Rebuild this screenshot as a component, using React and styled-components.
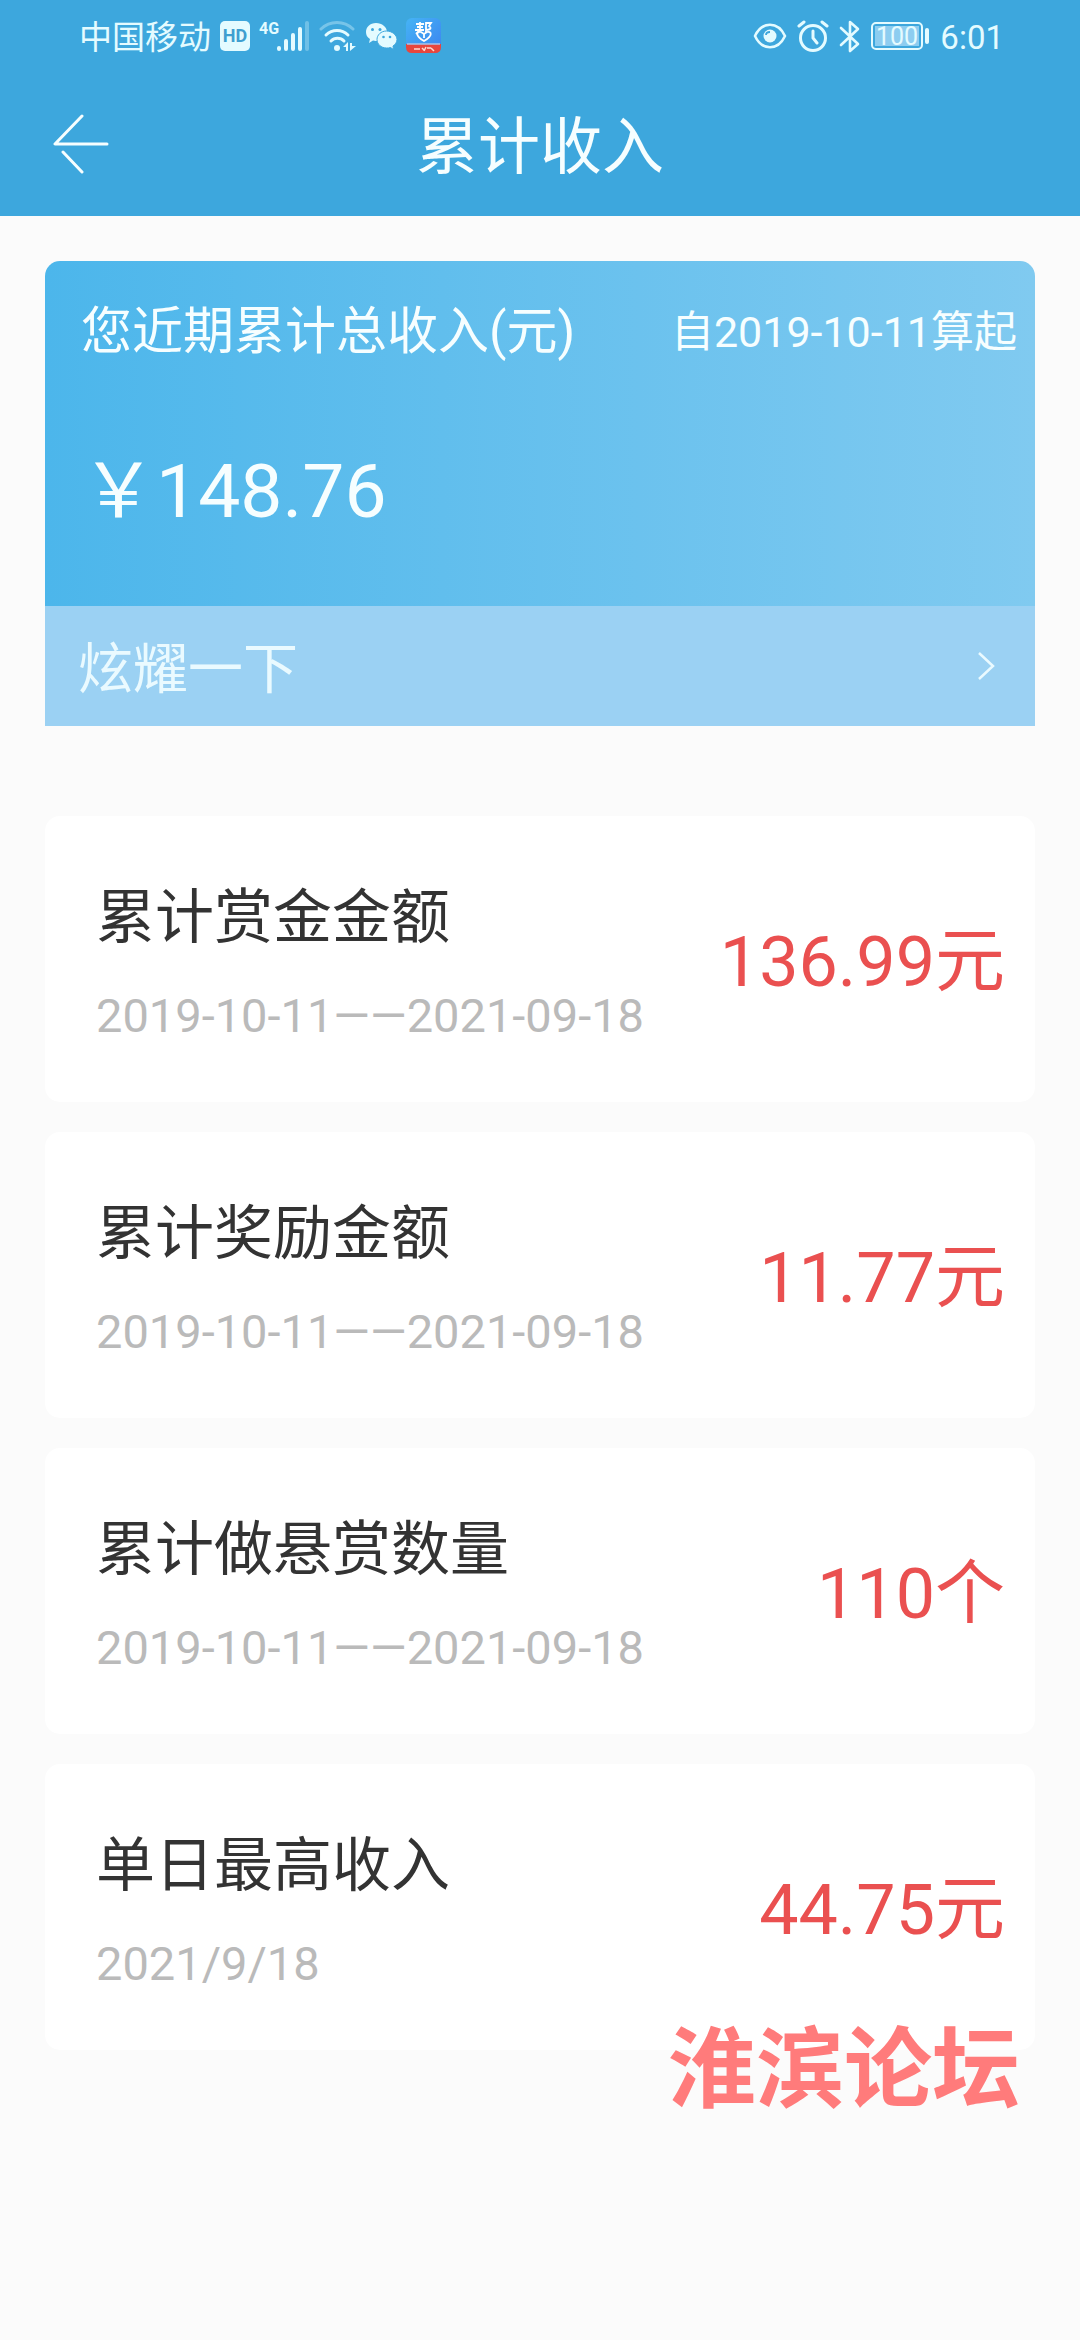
import styled, { createGlobalStyle } from 'styled-components'

const GlobalStyle = createGlobalStyle`
    *, *::before, *::after {
        box-sizing: border-box;
    }

    body {
        margin: 0;
        background-color: #fbfbfb;
        font-family: Roboto, 'Noto Sans CJK SC', sans-serif;
    }

    h1, h2, p, ul {
        margin: 0;
        padding: 0;
        font-weight: 400;
    }

    button {
        border: none;
        padding: 0;
        background: none;
        font-family: inherit;
        cursor: pointer;
    }

    svg {
        display: block;
        flex-shrink: 0;
    }
`

const Page = styled.div`
    min-height: 100vh;
`

const Header = styled.header`
    background-color: #3da7dd;
    color: #f6feff;
`

const StatusBar = styled.div`
    display: flex;
    align-items: center;
    justify-content: space-between;
    height: 72px;
    padding: 0 76px 0 79px;
    color: #e4fbff;
`

const StatusGroup = styled.div`
    display: flex;
    align-items: center;
    gap: ${(props) => props.$gap}px;
`

const StatusText = styled.span`
    padding-top: 3px;
    font-size: 33px;
    line-height: 40px;
`

const NavBar = styled.div`
    display: grid;
    grid-template-columns: 160px 1fr 160px;
    align-items: center;
    height: 144px;
`

const BackButton = styled.button`
    display: flex;
    align-items: center;
    height: 144px;
    padding-left: 52px;
    color: inherit;
`

const PageTitle = styled.h1`
    padding-top: 8px;
    font-size: 62px;
    line-height: 88px;
    text-align: center;
`

const Main = styled.main`
    padding: 45px 45px 0;
`

const SummaryCard = styled.section`
    border-radius: 15px 15px 0 0;
    overflow: hidden;
    color: #f6feff;
`

const SummaryBody = styled.div`
    height: 345px;
    padding: 36px 18px 0 36px;
    background: linear-gradient(to right, #4cb6eb, #80caf0);
`

const SummaryTop = styled.div`
    display: flex;
    align-items: center;
    justify-content: space-between;
`

const SummaryLabel = styled.h2`
    font-size: 51px;
    line-height: 70px;
`

const SummarySince = styled.span`
    font-size: 43px;
    line-height: 70px;
`

const SummaryAmount = styled.p`
    margin-top: 72px;
    font-size: 75px;
    line-height: 104px;
`

const ShareButton = styled.button`
    display: flex;
    align-items: center;
    justify-content: space-between;
    width: 100%;
    height: 120px;
    padding: 0 40px 0 33px;
    background-color: #9bd1f3;
    color: #eafaff;
    font-size: 55px;
    line-height: 80px;
`

const ShareLabel = styled.span`
    padding-top: 6px;
`

const StatList = styled.ul`
    display: flex;
    flex-direction: column;
    gap: 30px;
    margin-top: 90px;
    list-style: none;
`

const StatCard = styled.li`
    display: flex;
    align-items: center;
    justify-content: space-between;
    height: 286px;
    padding: 6px 30px 0 51px;
    border-radius: 15px;
    background-color: #fff;
`

const StatInfo = styled.div`
    display: flex;
    flex-direction: column;
    gap: 28px;
`

const StatTitle = styled.h2`
    font-size: 59px;
    line-height: 80px;
    color: #333;
`

const StatDate = styled.p`
    font-size: 47px;
    line-height: 60px;
    color: #bababa;
`

const StatValue = styled.span`
    font-size: 70px;
    line-height: 96px;
    color: #ea5050;
`

// sits over the lower edge of the last card
const Watermark = styled.div`
    position: absolute;
    top: 2004px;
    right: 60px;
    font-family: 'Noto Sans CJK SC', cursive;
    font-size: 88px;
    font-weight: 700;
    line-height: 116px;
    color: #ff7b7b;
    pointer-events: none;
`

const stats = [
    {
        title: '累计赏金金额',
        date: '2019-10-11——2021-09-18',
        value: '136.99元',
    },
    {
        title: '累计奖励金额',
        date: '2019-10-11——2021-09-18',
        value: '11.77元',
    },
    {
        title: '累计做悬赏数量',
        date: '2019-10-11——2021-09-18',
        value: '110个',
    },
    { title: '单日最高收入', date: '2021/9/18', value: '44.75元' },
]

function HdIcon() {
    return (
        <svg width="30" height="30" viewBox="0 0 30 30">
            <rect width="30" height="30" rx="5" fill="currentColor" />
            <text
                x="15"
                y="21"
                fontSize="18"
                fontWeight="700"
                textAnchor="middle"
                fill="#3f9fd0"
            >
                HD
            </text>
        </svg>
    )
}

function SignalIcon() {
    return (
        <svg width="51" height="32" viewBox="0 0 51 32">
            <text
                x="0"
                y="14"
                fontSize="16"
                fontWeight="700"
                fill="currentColor"
            >
                4G
            </text>
            <g stroke="currentColor" strokeWidth="4" strokeLinecap="round">
                <path d="M20 28v1M27 21v8M34 15v14M41 9v20" />
                <path d="M48 3v26" opacity="0.3" />
            </g>
        </svg>
    )
}

function WifiIcon() {
    return (
        <svg width="37" height="32" viewBox="0 0 37 32" fill="none">
            <g stroke="currentColor" strokeWidth="3" strokeLinecap="round">
                <path d="M2 9a23 23 0 0 1 32 0" opacity="0.35" />
                <path d="M7 15a16 16 0 0 1 22 0" />
                <path d="M12 21a9 9 0 0 1 13 0" />
            </g>
            <circle cx="18" cy="28" r="3" fill="currentColor" />
            <path d="M24 27l5-5v9h-2v-4zM31 23v8l6-5h-4v-3z" fill="currentColor" />
        </svg>
    )
}

function WechatIcon() {
    return (
        <svg width="32" height="28" viewBox="0 0 32 28">
            <path
                d="M11 1C5 1 1 5 1 10c0 3 1 5 4 7l-1 4 4-2.500c2 .5 3 .5 5 .5C21 19 22 14 22 10 22 5 17 1 11 1z"
                fill="currentColor"
            />
            <path
                d="M21.500 9C16 9 12 13 12 17.500S16 26 21.500 26c1.500 0 2.500 0 4-.5l3 2-.5-3.500c2.500-1.500 4-4 4-6.500C32 13 27 9 21.500 9z"
                fill="currentColor"
                stroke="#3da7dd"
            />
            <g fill="#3da7dd">
                <circle cx="7.500" cy="7.500" r="1.500" />
                <circle cx="15" cy="7.500" r="1.500" />
                <circle cx="18.500" cy="15" r="1.300" />
                <circle cx="25" cy="15" r="1.300" />
            </g>
        </svg>
    )
}

function HelpAppIcon() {
    return (
        <svg width="35" height="36" viewBox="0 0 35 36">
            <defs>
                <linearGradient id="appBlue" x1="0" y1="0" x2="1" y2="1">
                    <stop offset="0" stopColor="#45b4f5" />
                    <stop offset="1" stopColor="#3b83f0" />
                </linearGradient>
            </defs>
            <rect width="35" height="35" rx="6" fill="url(#appBlue)" />
            <path d="M0 26h35v3q0 6-6 6H6q-6 0-6-6z" fill="#e8463e" />
            <path d="M1 26h33" stroke="#a9c4ea" strokeWidth="1.500" />
            <g fill="none" stroke="#fff" strokeWidth="1.800">
                <path d="M10 6h8M11 9h6M9 12h9M14 4v8l-4 4M20 5h5l-2 3q4 3-2 4M20 4v11" />
                <path d="M18 23c-10-6-7-10-3-9l3 2 3-2c4-1 7 3-3 9zM18 15v5" />
            </g>
            <path d="M8 31h6M16 30l2 2M20 29l-2 4M21 30h4M25 30l3 3" stroke="#ffd9cf" strokeWidth="1.500" />
        </svg>
    )
}

function EyeIcon() {
    return (
        <svg width="34" height="28" viewBox="0 0 34 28" fill="none">
            <path
                d="M2 14C9-1 25-1 32 14 25 29 9 29 2 14z"
                stroke="currentColor"
                strokeWidth="2.600"
                strokeLinejoin="round"
            />
            <circle cx="17" cy="14" r="6.500" fill="currentColor" />
            <path d="M13 13q0-3 4-3" stroke="#3da7dd" strokeWidth="1.800" />
        </svg>
    )
}

function AlarmIcon() {
    return (
        <svg width="32" height="32" viewBox="0 0 32 32" fill="none">
            <g stroke="currentColor" strokeWidth="3" strokeLinecap="round">
                <circle cx="16" cy="18" r="12.500" />
                <path d="M16 11v7l4 5M2 6l5-4M25 2l5 4" />
            </g>
        </svg>
    )
}

function BluetoothIcon() {
    return (
        <svg width="22" height="33" viewBox="0 0 22 33" fill="none">
            <path
                d="M2 8l17 16-8 7V2l8 7L2 25"
                stroke="currentColor"
                strokeWidth="2.600"
                strokeLinecap="round"
                strokeLinejoin="round"
            />
        </svg>
    )
}

function BatteryIcon() {
    return (
        <svg width="59" height="28" viewBox="0 0 59 28">
            <rect
                x="1"
                y="1"
                width="50"
                height="26"
                rx="4"
                fill="none"
                stroke="currentColor"
                strokeWidth="2"
            />
            <rect x="4" y="4" width="44" height="20" fill="#8dcdf0" />
            <rect x="54" y="6" width="4" height="16" rx="2" fill="currentColor" />
            <text
                x="26"
                y="23"
                fontSize="25"
                textAnchor="middle"
                fill="currentColor"
            >
                100
            </text>
        </svg>
    )
}

function BackArrowIcon() {
    return (
        <svg width="58" height="60" viewBox="0 0 58 60" fill="none">
            <path
                d="M30 2L3 30h52M11 38l19 20"
                stroke="currentColor"
                strokeWidth="3"
                strokeLinecap="round"
                strokeLinejoin="round"
            />
        </svg>
    )
}

function ChevronIcon() {
    return (
        <svg width="18" height="28" viewBox="0 0 18 28" fill="none">
            <path d="M2 1l14 13L2 27" stroke="currentColor" strokeWidth="2.500" />
        </svg>
    )
}

function App() {
    return (
        <Page>
            <GlobalStyle />
            <Header>
                <StatusBar>
                    <StatusGroup $gap={9}>
                        <StatusText>中国移动</StatusText>
                        <HdIcon />
                        <SignalIcon />
                        <WifiIcon />
                        <WechatIcon />
                        <HelpAppIcon />
                    </StatusGroup>
                    <StatusGroup $gap={10}>
                        <EyeIcon />
                        <AlarmIcon />
                        <BluetoothIcon />
                        <BatteryIcon />
                        <StatusText>6:01</StatusText>
                    </StatusGroup>
                </StatusBar>
                <NavBar>
                    <BackButton type="button" aria-label="返回">
                        <BackArrowIcon />
                    </BackButton>
                    <PageTitle>累计收入</PageTitle>
                </NavBar>
            </Header>

            <Main>
                <SummaryCard>
                    <SummaryBody>
                        <SummaryTop>
                            <SummaryLabel>您近期累计总收入(元)</SummaryLabel>
                            <SummarySince>自2019-10-11算起</SummarySince>
                        </SummaryTop>
                        <SummaryAmount>￥148.76</SummaryAmount>
                    </SummaryBody>
                    <ShareButton type="button">
                        <ShareLabel>炫耀一下</ShareLabel>
                        <ChevronIcon />
                    </ShareButton>
                </SummaryCard>

                <StatList>
                    {stats.map((stat) => (
                        <StatCard key={stat.title}>
                            <StatInfo>
                                <StatTitle>{stat.title}</StatTitle>
                                <StatDate>{stat.date}</StatDate>
                            </StatInfo>
                            <StatValue>{stat.value}</StatValue>
                        </StatCard>
                    ))}
                </StatList>
            </Main>
            <Watermark>淮滨论坛</Watermark>
        </Page>
    )
}

export default App
